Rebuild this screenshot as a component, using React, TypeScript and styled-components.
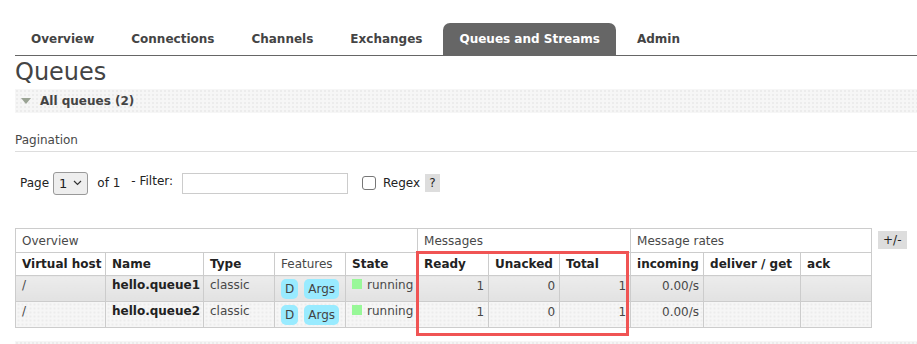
import React from 'react'
import styled, { createGlobalStyle } from 'styled-components'

const GlobalStyle = createGlobalStyle`
    body {
        margin: 0;
        font-family: "DejaVu Sans", Verdana, sans-serif;
        font-size: 12px;
        color: #484848;
        background: #fff;
    }
`

const dotted = `
    background-color: #f6f6f6;
    background-image: radial-gradient(#ececec 1px, transparent 1px);
    background-size: 4px 4px;
`

const Page = styled.div`
    padding-left: 15px;
    width: 902px;
    height: 344px;
    overflow: hidden;
`

const Tabs = styled.ul`
    display: flex;
    list-style: none;
    margin: 23px 0 0;
    padding: 0;
    border-bottom: 1px solid #666;
`

const Tab = styled.li<{ $active?: boolean }>`
    height: 32px;
    line-height: 32px;
    padding: 0 16px;
    margin-right: 5px;
    font-weight: bold;
    font-size: 12px;
    border-radius: 7px 7px 0 0;
    color: ${p => (p.$active ? '#fff' : '#444')};
    background: ${p => (p.$active ? '#666' : 'transparent')};
`

const Title = styled.h1`
    margin: 0;
    font-size: 24px;
    font-weight: normal;
    line-height: 33px;
    color: #444;
`

const SectionHeader = styled.div`
    ${dotted}
    height: 24px;
    display: flex;
    align-items: center;
    gap: 9px;
    padding-left: 5px;
    font-weight: bold;
    color: #444;
`

const Triangle = styled.span`
    width: 0;
    height: 0;
    border-left: 5px solid transparent;
    border-right: 5px solid transparent;
    border-top: 6px solid #9aa394;
    margin-left: 1px;
`

const SubTitle = styled.h3`
    margin: 20px 0 0;
    font-size: 12px;
    font-weight: normal;
    padding-bottom: 4px;
    border-bottom: 1px solid #ddd;
`

const FilterRow = styled.div`
    display: flex;
    align-items: center;
    margin-top: 19px;
    padding-left: 5px;
    height: 24px;
`

const Label = styled.span<{ $ml?: number; $up?: boolean }>`
    margin-left: ${p => p.$ml ?? 0}px;
    color: #222;
    position: relative;
    top: ${p => (p.$up ? -2 : 0)}px;
`

const SelectBox = styled.div`
    display: flex;
    align-items: center;
    gap: 6px;
    margin-left: 4px;
    height: 21px;
    padding: 0 5px 0 5px;
    border: 1px solid #999;
    border-radius: 3px;
    background: #eee;
    color: #222;
    font-size: 13px;
`

const FilterInput = styled.input`
    margin: 0 0 0 9px;
    width: 162px;
    height: 17px;
    border: 1px solid #ccc;
    padding: 1px;
`

const Check = styled.span`
    width: 12px;
    height: 12px;
    margin-left: 14px;
    border: 1px solid #777;
    border-radius: 3px;
    background: #fff;
`

const Help = styled.span`
    margin-left: 5px;
    background: #ddd;
    padding: 2px 4px;
    color: #222;
`

const TableArea = styled.div`
    display: flex;
    align-items: flex-start;
    margin-top: 33px;
    position: relative;
`

const Table = styled.table`
    border-collapse: collapse;
    table-layout: fixed;
    width: 856px;
    td, th {
        border: 1px solid #ccc;
        padding: 0 6px;
        text-align: left;
        white-space: nowrap;
        overflow: hidden;
    }
`

const GroupRow = styled.tr`
    height: 24px;
    th { font-weight: normal; }
`

const HeadRow = styled.tr`
    height: 23px;
    th { font-weight: bold; color: #222; }
    th.plain { font-weight: normal; color: #484848; }
`

const DataRow = styled.tr<{ $alt?: boolean }>`
    height: 26px;
    td {
        vertical-align: top;
        padding-top: 2px;
        ${p => (p.$alt ? dotted : 'background: linear-gradient(#ececec, #e2e2e2);')}
    }
    td.num { text-align: right; padding-top: 3px; padding-right: 4px; }
`

const Bold = styled.span`
    font-weight: bold;
    color: #222;
`

const Badge = styled.span`
    display: inline-block;
    background: #99ebff;
    border-radius: 5px;
    padding: 3px 4px;
    margin-right: 6px;
    margin-top: 1px;
    color: #444;
`

const StateDot = styled.span`
    display: inline-block;
    width: 10px;
    height: 10px;
    background: #98f898;
    margin-right: 5px;
`

const ToggleBtn = styled.span`
    margin: 3px 0 0 6px;
    padding: 2px 5px;
    background: #ddd;
    color: #222;
`

const Highlight = styled.div`
    position: absolute;
    left: 401px;
    top: 23px;
    width: 207px;
    height: 79px;
    border: 3px solid #f05454;
    pointer-events: none;
`

const NextSection = styled.div`
    ${dotted}
    height: 24px;
    margin-top: 13px;
`

const tabs = ['Overview', 'Connections', 'Channels', 'Exchanges', 'Queues and Streams', 'Admin']
const widths = [90, 98, 71, 71, 72, 71, 71, 71, 73, 97, 71]
const queues = ['hello.queue1', 'hello.queue2']

export default function App() {
    return (
        <Page>
            <GlobalStyle />
            <Tabs>
                {tabs.map(t => (
                    <Tab key={t} $active={t === 'Queues and Streams'}>{t}</Tab>
                ))}
            </Tabs>
            <Title>Queues</Title>
            <SectionHeader><Triangle />All queues (2)</SectionHeader>
            <SubTitle>Pagination</SubTitle>
            <FilterRow>
                <Label>Page</Label>
                <SelectBox>
                    1
                    <svg width="9" height="6" viewBox="0 0 9 6"><path d="M1 1l3.5 3.5L8 1" fill="none" stroke="#333" strokeWidth="1.2" /></svg>
                </SelectBox>
                <Label $ml={9}>of 1</Label>
                <Label $ml={11} $up>- Filter:</Label>
                <FilterInput />
                <Check />
                <Label $ml={7}>Regex</Label>
                <Help>?</Help>
            </FilterRow>
            <TableArea>
                <Table>
                    <colgroup>
                        {widths.map((w, i) => <col key={i} style={{ width: w }} />)}
                    </colgroup>
                    <thead>
                        <GroupRow>
                            <th colSpan={5}>Overview</th>
                            <th colSpan={3}>Messages</th>
                            <th colSpan={3}>Message rates</th>
                        </GroupRow>
                        <HeadRow>
                            <th>Virtual host</th>
                            <th>Name</th>
                            <th>Type</th>
                            <th className="plain">Features</th>
                            <th>State</th>
                            <th>Ready</th>
                            <th>Unacked</th>
                            <th>Total</th>
                            <th>incoming</th>
                            <th>deliver / get</th>
                            <th>ack</th>
                        </HeadRow>
                    </thead>
                    <tbody>
                        {queues.map((q, i) => (
                            <DataRow key={q} $alt={i === 1}>
                                <td>/</td>
                                <td><Bold>{q}</Bold></td>
                                <td>classic</td>
                                <td><Badge>D</Badge><Badge>Args</Badge></td>
                                <td><StateDot />running</td>
                                <td className="num">1</td>
                                <td className="num">0</td>
                                <td className="num">1</td>
                                <td className="num">0.00/s</td>
                                <td></td>
                                <td></td>
                            </DataRow>
                        ))}
                    </tbody>
                </Table>
                <ToggleBtn>+/-</ToggleBtn>
                <Highlight />
            </TableArea>
            <NextSection />
        </Page>
    )
}
